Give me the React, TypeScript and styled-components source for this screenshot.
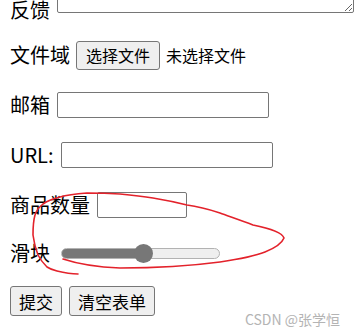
import React from "react";
import styled, { createGlobalStyle } from "styled-components";

const GlobalStyle = createGlobalStyle`
  html, body {
    margin: 0;
    padding: 0;
    background: #fff;
    overflow: hidden;
  }
  body {
    font-family: "Noto Sans CJK SC", "Microsoft YaHei", sans-serif;
    color: #000;
  }
`;

const Page = styled.div`
  position: relative;
  width: 356px;
  height: 335px;
  overflow: hidden;
`;

const Form = styled.form`
  display: flex;
  flex-direction: column;
  gap: 20px;
  margin-top: -30px;
  padding-left: 10px;
`;

const Row = styled.div<{ $end?: boolean; $h?: number }>`
  display: flex;
  align-items: ${(p) => (p.$end ? "flex-end" : "center")};
  height: ${(p) => p.$h ?? 30}px;
  gap: 6px;
`;

const Label = styled.span`
  font-size: 20px;
  line-height: 20px;
  white-space: nowrap;
`;

const Area = styled.textarea`
  box-sizing: border-box;
  width: 297px;
  height: 46px;
  margin: 0 0 7px 1px;
  border: 1px solid #767676;
  border-radius: 2px;
  font-family: inherit;
`;

const FileButton = styled.button`
  box-sizing: border-box;
  height: 29px;
  padding: 0 9px;
  background: #efefef;
  border: 1px solid #767676;
  border-radius: 3px;
  font-family: inherit;
  font-size: 16px;
  line-height: 16px;
  color: #000;
`;

const FileHint = styled.span`
  font-size: 16px;
  line-height: 16px;
`;

const Field = styled.input<{ $w: number }>`
  box-sizing: border-box;
  width: ${(p) => p.$w}px;
  height: 26px;
  margin: 0 0 0 1px;
  border: 1px solid #767676;
  border-radius: 2px;
  font-family: inherit;
  padding: 0 4px;
`;

const Slider = styled.input`
  -webkit-appearance: none;
  appearance: none;
  box-sizing: border-box;
  width: 159px;
  height: 11px;
  margin: 0 0 0 5px;
  border-radius: 6px;
  border: 1px solid #b2b2b2;
  background: linear-gradient(to right, #777 0 52%, #efefef 52% 100%);
  outline: none;

  &::-webkit-slider-thumb {
    -webkit-appearance: none;
    appearance: none;
    width: 19px;
    height: 19px;
    border-radius: 50%;
    background: #777;
    border: none;
  }
`;

const Button = styled.button`
  box-sizing: border-box;
  height: 30px;
  padding: 0 8px;
  background: #efefef;
  border: 1px solid #767676;
  border-radius: 3px;
  font-family: inherit;
  font-size: 17px;
  line-height: 17px;
  color: #000;
`;

const Buttons = styled.div`
  display: flex;
  gap: 7px;
  margin-top: 0;
`;

const Watermark = styled.div`
  position: absolute;
  right: 16px;
  bottom: 8px;
  font-family: "Noto Sans CJK SC", "Liberation Sans", sans-serif;
  font-size: 14px;
  line-height: 16px;
  color: #b4b4b4;
`;

const Scribble = styled.svg`
  position: absolute;
  left: 0;
  top: 0;
  pointer-events: none;
`;

export default function App() {
  return (
    <Page>
      <GlobalStyle />
      <Form onSubmit={(e) => e.preventDefault()}>
        <Row $end $h={50}>
          <Label>反馈</Label>
          <Area />
        </Row>
        <Row>
          <Label>文件域</Label>
          <FileButton type="button">选择文件</FileButton>
          <FileHint>未选择文件</FileHint>
        </Row>
        <Row>
          <Label>邮箱</Label>
          <Field $w={212} type="email" />
        </Row>
        <Row>
          <Label>URL:</Label>
          <Field $w={212} type="url" />
        </Row>
        <Row>
          <Label>商品数量</Label>
          <Field $w={90} type="number" />
        </Row>
        <Row $h={26}>
          <Label>滑块</Label>
          <Slider type="range" min={0} max={100} defaultValue={52} />
        </Row>
        <Buttons>
          <Button type="submit">提交</Button>
          <Button type="reset">清空表单</Button>
        </Buttons>
      </Form>
      <Scribble width="356" height="335" viewBox="0 0 356 335">
        <path
          d="M63 259 C75 263 95 267 120 268 C150 268 190 266 220 262 C240 259 255 256 265 252 C275 248 282 243 284 238 C282 232 268 228 253 225 C240 220 228 216 220 213 C205 208 195 206 187 205 C175 202 165 200 153 198 C140 196 130 195 120 194 C105 193 95 193 87 193 C75 194 67 195 60 197 C52 199 47 201 43 204 C38 208 36 211 35 215 C33 222 33 228 33 235 C34 243 36 250 38 255 C41 261 44 264 47 267 C50 269 53 270 57 271 C65 273 72 274 78 274"
          fill="none"
          stroke="#e3222b"
          strokeWidth="1.6"
          strokeLinecap="round"
        />
      </Scribble>
      <Watermark>CSDN @张学恒</Watermark>
    </Page>
  );
}
